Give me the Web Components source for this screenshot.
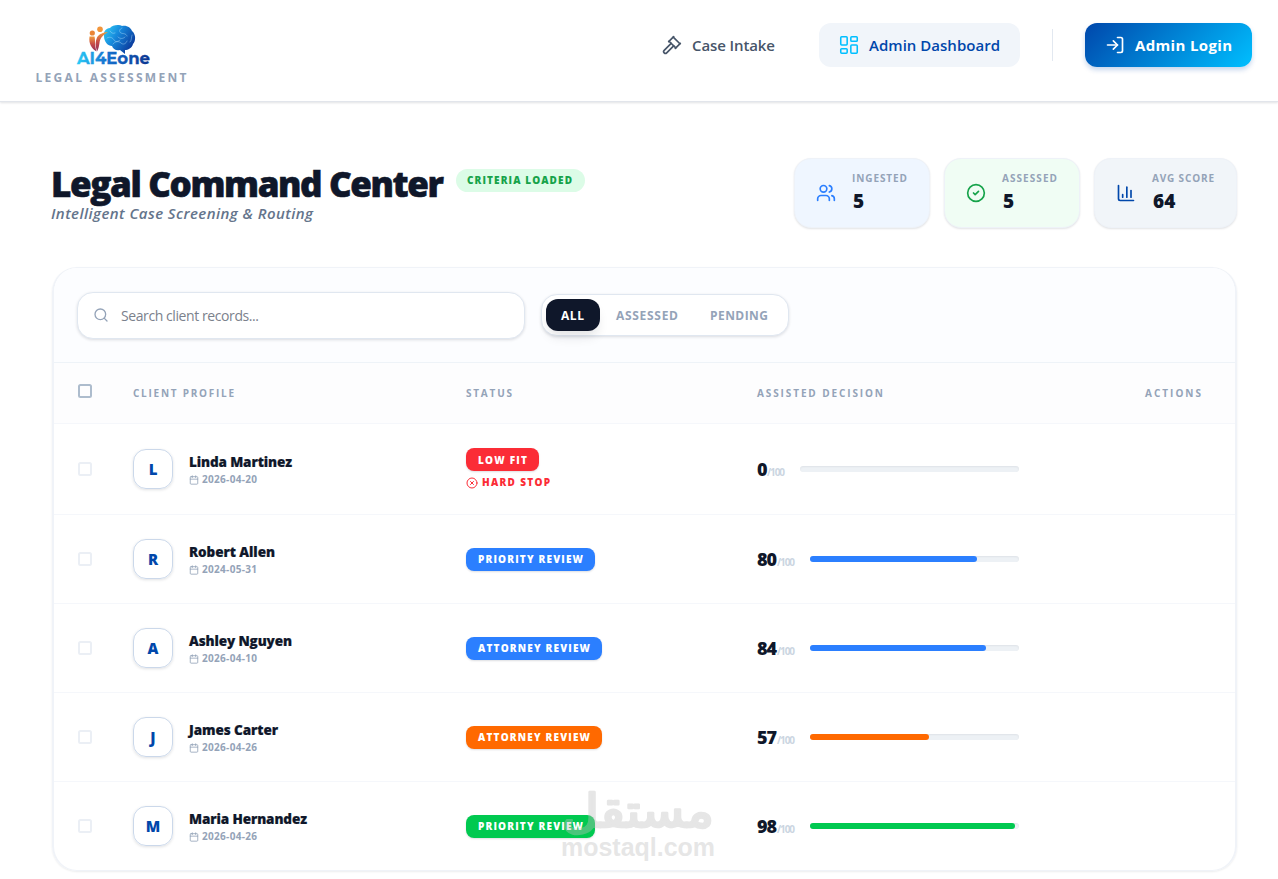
<!DOCTYPE html>
<html lang="en">
<head>
<meta charset="utf-8">
<title>Legal Command Center</title>
<style>
  body {
    margin: 0;
    height: 879px;
    overflow: hidden;
    background: #fff;
    color: #0f172a;
    font-family: "Segoe UI", "Open Sans", "Noto Sans", sans-serif;
  }
</style>
</head>
<body>
<legal-app></legal-app>

<script>
/**
 * Creates a template from a string of markup.
 *
 * @param {string} html - The markup.
 * @returns {HTMLTemplateElement} The template.
 */
const createTemplate = html => {
  const template = document.createElement('template')
  template.innerHTML = html
  return template
}

const icons = {
  gavel: '<path d="m14 13-8.381 8.38a1 1 0 0 1-3.001-3l8.384-8.381"/><path d="m16 16 6-6"/><path d="m21.5 10.5-8-8"/><path d="m8 8 6-6"/><path d="m8.5 7.5 8 8"/>',
  dashboard: '<rect width="7" height="9" x="3" y="3" rx="1"/><rect width="7" height="5" x="14" y="3" rx="1"/><rect width="7" height="9" x="14" y="12" rx="1"/><rect width="7" height="5" x="3" y="16" rx="1"/>',
  login: '<path d="m10 17 5-5-5-5"/><path d="M15 12H3"/><path d="M15 3h4a2 2 0 0 1 2 2v14a2 2 0 0 1-2 2h-4"/>',
  users: '<path d="M16 21v-2a4 4 0 0 0-4-4H6a4 4 0 0 0-4 4v2"/><circle cx="9" cy="7" r="4"/><path d="M22 21v-2a4 4 0 0 0-3-3.87"/><path d="M16 3.13a4 4 0 0 1 0 7.75"/>',
  check: '<circle cx="12" cy="12" r="10"/><path d="m9 12 2 2 4-4"/>',
  chart: '<path d="M3 3v16a2 2 0 0 0 2 2h16"/><path d="M18 17V9"/><path d="M13 17V5"/><path d="M8 17v-3"/>',
  search: '<circle cx="11" cy="11" r="8"/><path d="m21 21-4.3-4.3"/>',
  calendar: '<path d="M8 2v4"/><path d="M16 2v4"/><rect width="18" height="18" x="3" y="4" rx="2"/><path d="M3 10h18"/>',
  stop: '<circle cx="12" cy="12" r="10"/><path d="m15 9-6 6"/><path d="m9 9 6 6"/>'
}

customElements.define('ui-icon',
  /**
   * Represents a line icon.
   */
  class extends HTMLElement {
    /**
     * Called when the element is inserted in the DOM.
     */
    connectedCallback () {
      const size = this.getAttribute('size') || 20
      const stroke = this.getAttribute('stroke') || 2
      this.attachShadow({ mode: 'open' }).innerHTML = `
        <style>
          :host { display: block; flex: none; width: ${size}px; height: ${size}px; }
          svg { display: block; }
        </style>
        <svg width="${size}" height="${size}" viewBox="0 0 24 24" fill="none" stroke="currentColor"
          stroke-width="${stroke}" stroke-linecap="round" stroke-linejoin="round">${icons[this.getAttribute('name')]}</svg>`
    }
  }
)

customElements.define('fit-text',
  /**
   * A single line of text, tracked so that it spans the given width.
   */
  class extends HTMLElement {
    /**
     * Called when the element is inserted in the DOM.
     */
    connectedCallback () {
      const width = Number(this.getAttribute('width'))
      this.attachShadow({ mode: 'open' }).innerHTML = `
        <style>
          :host { display: block; flex: none; width: ${width}px; white-space: nowrap; }
          span { display: inline-block; }
        </style>
        <span><slot></slot></span>`
      const span = this.shadowRoot.querySelector('span')
      const natural = span.getBoundingClientRect().width
      const gaps = Math.max(this.textContent.length - 1, 1)
      span.style.letterSpacing = `${(width - natural) / gaps}px`
    }
  }
)

customElements.define('brand-logo',
  /**
   * The product logo and its tagline.
   */
  class extends HTMLElement {
    #template = createTemplate(`
      <style>
        :host { display: flex; flex-direction: column; align-items: center; gap: 3px; width: 152px; padding-top: 23px; }
        svg { display: block; margin-left: 5px; }
        fit-text { font-size: 12px; line-height: 16px; font-weight: 700; color: #94a3b8; }
      </style>
      <svg width="76" height="44" viewBox="0 0 76 44">
        <defs>
          <linearGradient id="brain" x1="0" y1="0" x2="1" y2="0.6">
            <stop offset="0" stop-color="#35d3f8"/><stop offset=".45" stop-color="#1689dc"/><stop offset="1" stop-color="#0b3a9c"/>
          </linearGradient>
          <linearGradient id="word" x1="0" x2="1" y1="0" y2="0">
            <stop offset="0" stop-color="#2bd0f8"/><stop offset=".4" stop-color="#1573d0"/><stop offset="1" stop-color="#0b3590"/>
          </linearGradient>
          <linearGradient id="people" x1="0" x2="0" y1="0" y2="1">
            <stop offset="0" stop-color="#f29a3c"/><stop offset=".55" stop-color="#c2474a"/><stop offset="1" stop-color="#8e2f5c"/>
          </linearGradient>
        </defs>
        <path fill="url(#brain)" d="M28 13c-1-4 2-8 6-8 2-3 9-4 12-2 5-1 9 2 10 5 4 3 4 10 1 13-1 4-5 6-8 6l0 4-5-4c-4 1-7-1-8-4-4 0-8-4-8-10z"/>
        <g fill="none" stroke="#bfe9ff" stroke-opacity=".5" stroke-width=".8" stroke-linecap="round">
          <path d="M34 8c1 2 3 3 5 2M46 5c-3 1-3 4-1 5s5 0 6 3M31 15c3-2 6 0 7 2s4 2 6 0M42 14c2 2 5 2 7 0M37 21c2-3 6-3 8-1s5 1 6-2M56 12c-1 3 0 5-2 7"/>
        </g>
        <circle cx="24" cy="6.200" r="2.800" fill="#f2953a"/>
        <circle cx="16.300" cy="10" r="2.600" fill="#ea8435"/>
        <path fill="url(#people)" d="M13.500 13.500h5c1 4 0 8 2 15-5-3-8-8-7-15z"/>
        <path fill="url(#people)" d="M32 9c-5 3-8 6-8.500 11-.5 3-1 6-2.500 8.500-1.500-5-2-10 0-14 2-3.500 6-5 11-5.500z"/>
        <text x="1" y="40.500" font-family="Montserrat, Inter, sans-serif" font-size="16" font-weight="700" textLength="73" lengthAdjust="spacingAndGlyphs" fill="url(#word)" stroke="url(#word)" stroke-width=".3">AI4Eone</text>
      </svg>
      <fit-text width="151">LEGAL ASSESSMENT</fit-text>
    `)

    /**
     * Creates an instance of the current type.
     */
    constructor () {
      super()
      this.attachShadow({ mode: 'open' }).appendChild(this.#template.content.cloneNode(true))
    }
  }
)

customElements.define('app-header',
  /**
   * The top bar with logo and navigation.
   */
  class extends HTMLElement {
    #template = createTemplate(`
      <style>
        :host {
          display: flex;
          justify-content: space-between;
          box-sizing: border-box;
          height: 102px;
          padding: 0 26px 0 35px;
          border-bottom: 1px solid #e2e5eb;
          box-shadow: 0 1px 2px rgba(15, 23, 42, .12);
          background: #fff;
        }
        nav { display: flex; align-items: center; height: 44px; margin-top: 23px; font-size: 15px; font-weight: 600; }
        a { display: flex; align-items: center; box-sizing: border-box; height: 44px; border-radius: 12px; }
        .intake { color: #475569; gap: 10px; margin-right: 44px; }
        .dashboard { width: 201px; padding-left: 19px; gap: 9px; background: #f1f5fa; color: #0047ab; }
        .dashboard ui-icon { color: #00bfff; }
        hr { width: 1px; height: 32px; margin: 0 32px; border: 0; background: #e2e8f0; }
        .login {
          width: 167px;
          padding-left: 20px;
          gap: 10px;
          color: #fff;
          font-weight: 700;
          background: linear-gradient(135deg, #0047ab, #00bfff);
          box-shadow: 0 3px 5px rgba(0, 71, 171, .22);
        }
      </style>
      <brand-logo></brand-logo>
      <nav>
        <a class="intake"><ui-icon name="gavel" size="20"></ui-icon><fit-text width="83">Case Intake</fit-text></a>
        <a class="dashboard"><ui-icon name="dashboard" size="22" stroke="1.7"></ui-icon><fit-text width="131">Admin Dashboard</fit-text></a>
        <hr>
        <a class="login"><ui-icon name="login"></ui-icon><fit-text width="97">Admin Login</fit-text></a>
      </nav>
    `)

    /**
     * Creates an instance of the current type.
     */
    constructor () {
      super()
      this.attachShadow({ mode: 'open' }).appendChild(this.#template.content.cloneNode(true))
    }
  }
)

customElements.define('stat-card',
  /**
   * Represents a card with an icon, a label and a value.
   */
  class extends HTMLElement {
    /**
     * Called when the element is inserted in the DOM.
     */
    connectedCallback () {
      this.attachShadow({ mode: 'open' }).innerHTML = `
        <style>
          :host {
            display: flex;
            align-items: center;
            gap: 16px;
            box-sizing: border-box;
            width: 136px;
            height: 70px;
            padding-left: 21px;
            border: 1px solid #eef2f8;
            border-radius: 17px;
            box-shadow: 0 1px 2px rgba(15, 23, 42, .12);
          }
          .label { font-size: 10px; line-height: 15px; font-weight: 700; color: #94a3b8; }
          .value { padding: 2px 0 1px 1px; font-size: 19px; line-height: 27px; font-weight: 800; }
        </style>
        <ui-icon name="${this.getAttribute('icon')}"></ui-icon>
        <div>
          <fit-text class="label" width="${this.getAttribute('label-width')}">${this.getAttribute('label')}</fit-text>
          <div class="value"><slot></slot></div>
        </div>`
    }
  }
)

customElements.define('page-heading',
  /**
   * The title row with the statistics.
   */
  class extends HTMLElement {
    #template = createTemplate(`
      <style>
        :host { display: flex; justify-content: space-between; padding: 56px 41px 0 51px; }
        .title { display: flex; gap: 12px; padding-top: 3px; }
        h1 { margin: 0; font-size: 35px; line-height: 45px; font-weight: 800; -webkit-text-stroke: .6px currentColor; }
        .badge {
          display: flex;
          justify-content: center;
          align-items: center;
          box-sizing: border-box;
          width: 129px;
          height: 23px;
          margin-top: 8px;
          padding: 0 2px 2px 0;
          border-radius: 12px;
          background: #dcfce7;
          color: #16a34a;
          font-size: 10px;
          font-weight: 800;
        }
        .subtitle { margin-top: -4px; font-size: 15px; line-height: 23px; font-weight: 600; font-style: italic; color: #64748b; }
        .stats { display: flex; gap: 14px; }
        .users { color: #2b7fff; background: #eff6ff; }
        .check { color: #16a34a; background: #f0fdf4; }
        .chart { color: #0047ab; background: #f1f5f9; width: 143px; }
        stat-card span { color: #0f172a; }
      </style>
      <div>
        <div class="title">
          <h1><fit-text width="393">Legal Command Center</fit-text></h1>
          <div class="badge"><fit-text width="105">CRITERIA LOADED</fit-text></div>
        </div>
        <div class="subtitle"><fit-text width="262">Intelligent Case Screening &amp; Routing</fit-text></div>
      </div>
      <div class="stats">
        <stat-card class="users" icon="users" label="INGESTED" label-width="55"><span>5</span></stat-card>
        <stat-card class="check" icon="check" label="ASSESSED" label-width="55"><span>5</span></stat-card>
        <stat-card class="chart" icon="chart" label="AVG SCORE" label-width="62"><span>64</span></stat-card>
      </div>
    `)

    /**
     * Creates an instance of the current type.
     */
    constructor () {
      super()
      this.attachShadow({ mode: 'open' }).appendChild(this.#template.content.cloneNode(true))
    }
  }
)

customElements.define('records-toolbar',
  /**
   * Search field and status filter.
   */
  class extends HTMLElement {
    #template = createTemplate(`
      <style>
        :host {
          display: flex;
          align-items: flex-start;
          gap: 16px;
          box-sizing: border-box;
          height: 95px;
          padding: 24px 23px;
          border-bottom: 1px solid #eef3f8;
          background: #fcfdff;
        }
        .search, .filter {
          display: flex;
          align-items: center;
          box-sizing: border-box;
          border: 1px solid #e0e7f0;
          border-radius: 16px;
          background: #fff;
          box-shadow: 0 1px 3px rgba(15, 23, 42, .14);
        }
        .search { width: 448px; height: 47px; gap: 12px; padding: 0 0 1px 15px; font-size: 14px; color: #7b818c; }
        .search ui-icon { color: #94a3b8; }
        .filter { width: 248px; height: 42px; margin-top: 2px; padding-left: 4px; font-size: 12px; font-weight: 700; color: #94a3b8; }
        .active {
          display: flex;
          align-items: center;
          box-sizing: border-box;
          width: 54px;
          height: 32px;
          margin-right: 16px;
          padding-left: 15px;
          border-radius: 12px;
          background: #0f172a;
          color: #fff;
          box-shadow: 0 8px 12px -3px rgba(15, 23, 42, .13);
        }
        .assessed { margin-right: 32px; }
      </style>
      <div class="search"><ui-icon name="search" size="16"></ui-icon><fit-text width="138">Search client records...</fit-text></div>
      <div class="filter">
        <div class="active"><fit-text width="23">ALL</fit-text></div>
        <fit-text class="assessed" width="62">ASSESSED</fit-text>
        <fit-text width="58">PENDING</fit-text>
      </div>
    `)

    /**
     * Creates an instance of the current type.
     */
    constructor () {
      super()
      this.attachShadow({ mode: 'open' }).appendChild(this.#template.content.cloneNode(true))
    }
  }
)

customElements.define('check-box',
  /**
   * Represents an empty checkbox.
   */
  class extends HTMLElement {
    /**
     * Creates an instance of the current type.
     */
    constructor () {
      super()
      this.attachShadow({ mode: 'open' }).innerHTML = `
        <style>
          :host {
            display: block;
            box-sizing: border-box;
            width: 14px;
            height: 14px;
            border: 2px solid var(--box-color, #ebeff5);
            border-radius: 2.5px;
          }
        </style>`
    }
  }
)

customElements.define('status-badge',
  /**
   * Represents the routing status of a record.
   */
  class extends HTMLElement {
    /**
     * Called when the element is inserted in the DOM.
     */
    connectedCallback () {
      this.attachShadow({ mode: 'open' }).innerHTML = `
        <style>
          :host {
            display: inline-flex;
            align-items: center;
            box-sizing: border-box;
            height: 23px;
            padding: 0 12px;
            border-radius: 8px;
            background: ${this.getAttribute('color')};
            box-shadow: 0 1px 2px rgba(15, 23, 42, .14);
            color: #fff;
            font-size: 10px;
            font-weight: 800;
          }
        </style>
        <fit-text width="${this.getAttribute('width')}">${this.textContent}</fit-text>`
    }
  }
)

customElements.define('record-row',
  /**
   * Represents one client record.
   */
  class extends HTMLElement {
    /**
     * Called when the element is inserted in the DOM.
     */
    connectedCallback () {
      const { name, nameWidth, date, status, statusWidth, color, score, hardStop } = this.record
      this.attachShadow({ mode: 'open' }).innerHTML = `
        <style>
          :host {
            display: grid;
            grid-template-columns: 55px 333px 291px 262px;
            align-items: center;
            box-sizing: border-box;
            height: 89px;
            padding-left: 24px;
            border-bottom: 1px solid #f5f7fb;
          }
          :host(.tall) { height: 91px; }
          :host(:last-of-type) { border-color: transparent; }
          .profile { display: flex; align-items: center; gap: 16px; }
          .avatar {
            display: flex;
            justify-content: center;
            align-items: center;
            box-sizing: border-box;
            width: 40px;
            height: 40px;
            border: 1px solid #cbd8ea;
            border-radius: 13px;
            box-shadow: 0 1px 3px rgba(15, 23, 42, .13);
            font-size: 15px;
            font-weight: 800;
            color: #0047ab;
          }
          .name { padding-top: 2px; font-size: 13.500px; line-height: 18px; font-weight: 800; -webkit-text-stroke: .2px currentColor; }
          .date { display: flex; align-items: center; gap: 3px; padding-top: 1px; font-size: 10px; line-height: 15px; font-weight: 700; color: #94a3b8; }
          .status { display: flex; flex-direction: column; align-items: flex-start; }
          .stop { display: flex; align-items: center; gap: 4px; margin-top: 4px; height: 15px; font-size: 10px; font-weight: 800; color: #fb2c36; }
          .stop fit-text { padding-bottom: 1px; }
          .decision { display: flex; align-items: center; }
          .score { display: flex; align-items: baseline; margin-right: 15px; padding-top: 3px; font-size: 18px; line-height: 28px; font-weight: 800; }
          .of { font-size: 10px; font-weight: 700; color: #cbd5e1; }
          .track { flex: 1; height: 6px; border-radius: 3px; background: #edf1f5; box-shadow: inset 0 1px 2px rgba(15, 23, 42, .06); }
          .fill { width: ${score}%; height: 6px; border-radius: 3px; background: ${color}; }
        </style>
        <check-box></check-box>
        <div class="profile">
          <div class="avatar">${name[0]}</div>
          <div>
            <fit-text class="name" width="${nameWidth}">${name}</fit-text>
            <div class="date"><ui-icon name="calendar" size="10"></ui-icon><fit-text width="55">${date}</fit-text></div>
          </div>
        </div>
        <div class="status">
          <status-badge color="${color}" width="${statusWidth}">${status}</status-badge>
          ${hardStop ? '<div class="stop"><ui-icon name="stop" size="12"></ui-icon><fit-text width="68">HARD STOP</fit-text></div>' : ''}
        </div>
        <div class="decision">
          <div class="score"><fit-text width="${score > 9 ? 20 : 10}">${score}</fit-text><fit-text class="of" width="18">/100</fit-text></div>
          <div class="track"><div class="fill"></div></div>
        </div>`
    }
  }
)

customElements.define('records-table',
  /**
   * The table of client records.
   */
  class extends HTMLElement {
    #records = [
      { name: 'Linda Martinez', nameWidth: 103, date: '2026-04-20', status: 'LOW FIT', statusWidth: 49, color: '#fb2c36', score: 0, hardStop: true },
      { name: 'Robert Allen', nameWidth: 86, date: '2024-05-31', status: 'PRIORITY REVIEW', statusWidth: 105, color: '#2b7fff', score: 80 },
      { name: 'Ashley Nguyen', nameWidth: 103, date: '2026-04-10', status: 'ATTORNEY REVIEW', statusWidth: 112, color: '#2b7fff', score: 84 },
      { name: 'James Carter', nameWidth: 89, date: '2026-04-26', status: 'ATTORNEY REVIEW', statusWidth: 112, color: '#ff6900', score: 57 },
      { name: 'Maria Hernandez', nameWidth: 118, date: '2026-04-26', status: 'PRIORITY REVIEW', statusWidth: 105, color: '#00c950', score: 98 }
    ]

    #template = createTemplate(`
      <style>
        :host { display: block; }
        header {
          display: grid;
          grid-template-columns: 55px 333px 291px 1fr auto;
          align-items: center;
          box-sizing: border-box;
          height: 61px;
          padding: 0 34px 0 24px;
          border-bottom: 1px solid #f5f7fb;
          background: #fdfdfe;
          font-size: 10px;
          font-weight: 700;
          color: #94a3b8;
        }
        check-box { --box-color: #adbccd; margin-bottom: 4px; }
      </style>
      <header>
        <check-box></check-box>
        <fit-text width="101">CLIENT PROFILE</fit-text>
        <fit-text width="46">STATUS</fit-text>
        <fit-text width="126">ASSISTED DECISION</fit-text>
        <fit-text width="56">ACTIONS</fit-text>
      </header>
    `)

    /**
     * Called when the element is inserted in the DOM.
     */
    connectedCallback () {
      this.attachShadow({ mode: 'open' }).appendChild(this.#template.content.cloneNode(true))
      for (const record of this.#records) {
        const row = document.createElement('record-row')
        row.record = record
        row.classList.toggle('tall', Boolean(record.hardStop))
        this.shadowRoot.appendChild(row)
      }
    }
  }
)

customElements.define('site-watermark',
  /**
   * Translucent mark laid over the bottom of the page.
   */
  class extends HTMLElement {
    /**
     * Creates an instance of the current type.
     */
    constructor () {
      super()
      this.attachShadow({ mode: 'open' }).innerHTML = `
        <style>
          :host { display: block; position: absolute; left: 558px; top: 784px; opacity: .39; pointer-events: none; }
          svg { display: block; overflow: visible; }
        </style>
        <svg width="160" height="84" viewBox="0 0 160 84" fill="#bfbfbf">
          <text x="156" y="43" direction="rtl" font-family="DejaVu Sans" font-size="46" font-weight="400"
            textLength="152" lengthAdjust="spacingAndGlyphs" stroke="#bfbfbf" stroke-width="2.5" stroke-linejoin="round">مستقل</text>
          <text x="3" y="72" font-family="Liberation Sans" font-size="25" font-weight="700"
            textLength="154" lengthAdjust="spacingAndGlyphs">mostaql.com</text>
        </svg>`
    }
  }
)

customElements.define('legal-app',
  /**
   * Represents the whole dashboard page.
   */
  class extends HTMLElement {
    #template = createTemplate(`
      <style>
        :host { display: block; }
        main { display: block; }
        .panel {
          box-sizing: border-box;
          width: 1185px;
          height: 604px;
          margin: 39px 0 0 52px;
          overflow: hidden;
          border: 2px solid #f0f3f8;
          border-width: 1px 2px;
          border-radius: 25px;
          box-shadow: 0 1px 2px rgba(15, 23, 42, .08);
        }
      </style>
      <app-header></app-header>
      <main>
        <page-heading></page-heading>
        <section class="panel">
          <records-toolbar></records-toolbar>
          <records-table></records-table>
        </section>
      </main>
      <site-watermark></site-watermark>
    `)

    /**
     * Creates an instance of the current type.
     */
    constructor () {
      super()
      this.attachShadow({ mode: 'open' }).appendChild(this.#template.content.cloneNode(true))
    }
  }
)
</script>
</body>
</html>
